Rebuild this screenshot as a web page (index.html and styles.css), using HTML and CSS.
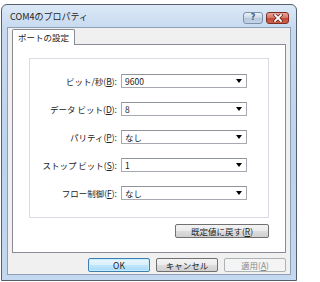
FILE: index.html
```html
<!DOCTYPE html>
<html lang="ja">
<head>
<meta charset="utf-8">
<title>COM4のプロパティ</title>
<link rel="stylesheet" href="styles.css">
</head>
<body>
<div class="window">
  <div class="titlebar">
    <span class="title">COM4のプロパティ</span>
    <div class="caption-buttons">
      <span class="cbtn help">?</span>
      <span class="cbtn close"><svg width="10" height="8" viewBox="0 0 10 8"><path d="M2 1 L8 7 M8 1 L2 7" stroke="#5a1e16" stroke-width="3.2" stroke-linecap="square"/><path d="M2 1 L8 7 M8 1 L2 7" stroke="#ffffff" stroke-width="1.8" stroke-linecap="square"/></svg></span>
    </div>
  </div>
  <div class="client">
    <div class="tabs"><div class="tab">ポートの設定</div></div>
    <div class="panel">
      <div class="group">
        <div class="row"><span class="label">ビット/秒(<u>B</u>):</span><div class="combo"><span>9600</span><svg class="arrow" width="6" height="4" viewBox="0 0 6 4"><path d="M0 0 H6 L3 4 Z" fill="#000"/></svg></div></div>
        <div class="row"><span class="label">データ ビット(<u>D</u>):</span><div class="combo"><span>8</span><svg class="arrow" width="6" height="4" viewBox="0 0 6 4"><path d="M0 0 H6 L3 4 Z" fill="#000"/></svg></div></div>
        <div class="row"><span class="label">パリティ(<u>P</u>):</span><div class="combo"><span>なし</span><svg class="arrow" width="6" height="4" viewBox="0 0 6 4"><path d="M0 0 H6 L3 4 Z" fill="#000"/></svg></div></div>
        <div class="row"><span class="label">ストップ ビット(<u>S</u>):</span><div class="combo"><span>1</span><svg class="arrow" width="6" height="4" viewBox="0 0 6 4"><path d="M0 0 H6 L3 4 Z" fill="#000"/></svg></div></div>
        <div class="row"><span class="label">フロー制御(<u>F</u>):</span><div class="combo"><span>なし</span><svg class="arrow" width="6" height="4" viewBox="0 0 6 4"><path d="M0 0 H6 L3 4 Z" fill="#000"/></svg></div></div>
      </div>
      <div class="reset-row"><span class="btn reset">既定値に戻す(<u>R</u>)</span></div>
    </div>
    <div class="buttons">
      <span class="btn default">OK</span>
      <span class="btn">キャンセル</span>
      <span class="btn disabled">適用(<u>A</u>)</span>
    </div>
  </div>
</div>
</body>
</html>
```
FILE: styles.css
```css
html, body {
  margin: 0;
  padding: 0;
  background: #ffffff;
}
body {
  width: 299px;
  height: 282px;
  overflow: hidden;
  font-family: "Noto Sans CJK JP", "Noto Sans", sans-serif;
  font-size: 8.5px;
  color: #222;
}
.window {
  box-sizing: border-box;
  margin: 4px 0 0 1px;
  width: 296px;
  height: 277px;
  border: 1px solid #56606c;
  border-radius: 6px 6px 0 0;
  background: linear-gradient(180deg, #dce9f7 0px, #c6d9ef 24px, #bdd3ec 60%, #c4d8ef 100%);
  padding: 0 5px 5px;
  display: flex;
  flex-direction: column;
}
.titlebar {
  height: 22px;
  display: flex;
  align-items: flex-start;
  justify-content: space-between;
}
.title {
  padding: 6px 0 0 3px;
  font-size: 9px;
  line-height: 12px;
  color: #1e1e1e;
}
.caption-buttons {
  display: flex;
  gap: 3px;
  margin: 7px 2px 0 0;
}
.cbtn {
  box-sizing: border-box;
  height: 12px;
  border-radius: 3px;
  display: flex;
  align-items: center;
  justify-content: center;
}
.help {
  width: 20px;
  border: 1px solid #7f91a8;
  background: linear-gradient(180deg, #e9f0f8 0%, #cbd8e8 50%, #b6c8de 51%, #c3d4e8 100%);
  color: #4a5d77;
  font-family: "DejaVu Sans", sans-serif;
  font-weight: bold;
  font-size: 8px;
  line-height: 10px;
}
.close {
  width: 23px;
  border: 1px solid #7a2e25;
  background: linear-gradient(180deg, #e9a997 0%, #d9776a 45%, #c04a36 52%, #cf6248 100%);
}
.close svg { display: block; }
.client {
  flex: 1;
  background: #f0f0f0;
  border: 1px solid #8d9fb4;
  padding: 1px 4px 2px 4px;
  display: flex;
  flex-direction: column;
}
.tabs {
  display: flex;
  height: 16px;
  margin-bottom: -1px;
}
.tab {
  position: relative;
  box-sizing: border-box;
  height: 16px;
  padding: 0 5px;
  background: #ffffff;
  border: 1px solid #898c95;
  border-bottom: none;
  border-radius: 2px 2px 0 0;
  line-height: 14px;
  z-index: 1;
}
.panel {
  box-sizing: border-box;
  height: 209px;
  background: #ffffff;
  border: 1px solid #898c95;
  padding: 13px 16px 0 16px;
}
.group {
  box-sizing: border-box;
  height: 160px;
  border: 1px solid #d9dde3;
  padding: 15px 0 0 0;
  display: flex;
  flex-direction: column;
  gap: 14px;
}
.row {
  display: flex;
  align-items: center;
  height: 14px;
  gap: 4px;
}
.label {
  width: 87px;
  text-align: right;
  white-space: nowrap;
}
.combo {
  box-sizing: border-box;
  width: 126px;
  height: 14px;
  border: 1px solid #a6a9af;
  border-top-color: #8f949b;
  background: #ffffff;
  display: flex;
  align-items: center;
  justify-content: space-between;
  padding: 0 4px 0 3px;
  line-height: 12px;
}
.arrow { display: block; }
.reset-row {
  display: flex;
  justify-content: flex-end;
  margin-top: 6px;
}
.btn {
  box-sizing: border-box;
  height: 14px;
  width: 62px;
  border: 1px solid #707070;
  border-radius: 2px;
  background: linear-gradient(180deg, #f3f3f3 0%, #ebebeb 48%, #dddddd 52%, #cfcfcf 100%);
  display: flex;
  align-items: center;
  justify-content: center;
  line-height: 12px;
  white-space: nowrap;
}
.btn.reset {
  width: 94px;
}
.btn.default {
  border-color: #3c7fb1;
  background: linear-gradient(180deg, #eaf6fd 0%, #d9f0fc 48%, #bee6fd 52%, #a7d9f5 100%);
  box-shadow: inset 0 0 0 1px #c7ecfd;
}
.btn.disabled {
  border-color: #adb2b5;
  background: #f4f4f4;
  color: #8a8a8a;
}
.buttons {
  display: flex;
  justify-content: flex-end;
  gap: 6px;
  margin-top: 5px;
}
u { text-decoration: underline; text-underline-offset: 1px; }
```
